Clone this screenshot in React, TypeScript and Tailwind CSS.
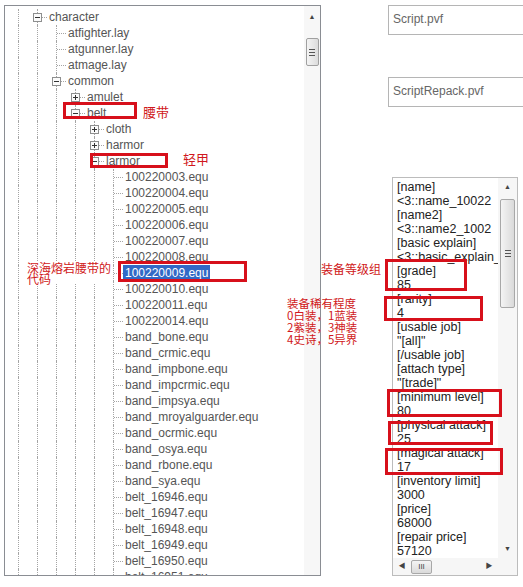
import React from "react";

type Node = { level: number; text: string; toggle?: "+" | "-"; selected?: boolean };

const files = [
  "100220003.equ", "100220004.equ", "100220005.equ", "100220006.equ", "100220007.equ",
  "100220008.equ", "100220009.equ", "100220010.equ", "100220011.equ", "100220014.equ",
  "band_bone.equ", "band_crmic.equ", "band_impbone.equ", "band_impcrmic.equ", "band_impsya.equ",
  "band_mroyalguarder.equ", "band_ocrmic.equ", "band_osya.equ", "band_rbone.equ", "band_sya.equ",
  "belt_16946.equ", "belt_16947.equ", "belt_16948.equ", "belt_16949.equ", "belt_16950.equ",
  "belt_16951.equ",
];

const nodes: Node[] = [
  { level: 1, text: "character", toggle: "-" },
  { level: 2, text: "atfighter.lay" },
  { level: 2, text: "atgunner.lay" },
  { level: 2, text: "atmage.lay" },
  { level: 2, text: "common", toggle: "-" },
  { level: 3, text: "amulet", toggle: "+" },
  { level: 3, text: "belt", toggle: "-" },
  { level: 4, text: "cloth", toggle: "+" },
  { level: 4, text: "harmor", toggle: "+" },
  { level: 4, text: "larmor", toggle: "-" },
  ...files.map((f) => ({ level: 5, text: f, selected: f === "100220009.equ" })),
];

const scriptLines = [
  "[name]", "<3::name_10022", "[name2]", "<3::name2_1002", "[basic explain]", "<3::basic_explain_",
  "[grade]", "85", "[rarity]", "4", "[usable job]", "\"[all]\"", "[/usable job]", "[attach type]",
  "\"[trade]\"", "[minimum level]", "80", "[physical attack]", "25", "[magical attack]", "17",
  "[inventory limit]", "3000", "[price]", "68000", "[repair price]", "57120",
];

function Guide() {
  return (
    <div className="flex w-[19px] shrink-0 justify-center">
      <div className="h-full border-l border-dotted border-[#a5a5a5]" />
    </div>
  );
}

function Expander({ sign }: { sign: "+" | "-" }) {
  return (
    <div className="relative w-[19px] shrink-0">
      <div className="absolute left-[9px] top-0 h-full border-l border-dotted border-[#a5a5a5]" />
      <div className="absolute left-[14px] top-[8px] w-[5px] border-t border-dotted border-[#a5a5a5]" />
      <svg className="absolute left-[5px] top-[4px]" width="9" height="9" viewBox="0 0 9 9">
        <rect x="0.5" y="0.5" width="8" height="8" fill="#fbfbfb" stroke="#8e8f8f" />
        <line x1="2" y1="4.5" x2="7" y2="4.5" stroke="#333" />
        {sign === "+" && <line x1="4.5" y1="2" x2="4.5" y2="7" stroke="#333" />}
      </svg>
    </div>
  );
}

function Leaf() {
  return (
    <div className="relative w-[19px] shrink-0">
      <div className="absolute left-[9px] top-0 h-full border-l border-dotted border-[#a5a5a5]" />
      <div className="absolute left-[10px] top-[8px] w-[9px] border-t border-dotted border-[#a5a5a5]" />
    </div>
  );
}

function TreeRow({ node }: { node: Node }) {
  const guides = Array.from({ length: node.level }, (_, i) => <Guide key={i} />);
  return (
    <div className="flex h-4 shrink-0">
      {guides}
      {node.toggle ? <Expander sign={node.toggle} /> : <Leaf />}
      <span
        className={
          node.selected
            ? "bg-[#3169c6] px-[2px] leading-4 text-white"
            : "px-[2px] leading-4 text-[#555]"
        }
      >
        {node.text}
      </span>
    </div>
  );
}

function Grip() {
  return (
    <div className="flex flex-col gap-[2px]">
      <div className="h-px w-[6px] bg-[#555]" />
      <div className="h-px w-[6px] bg-[#555]" />
      <div className="h-px w-[6px] bg-[#555]" />
    </div>
  );
}

function TreePanel() {
  return (
    <div className="flex h-[571px] w-[317px] shrink-0 border border-[#8a8d93] bg-white">
      <div className="flex flex-1 flex-col overflow-hidden pl-[4px] pt-[3px] text-[12px] whitespace-nowrap">
        {nodes.map((n, i) => (
          <TreeRow key={i} node={n} />
        ))}
      </div>
      <div className="flex w-[16px] shrink-0 flex-col items-center bg-[#f7f7f7]">
        <div className="flex h-[22px] items-center justify-center text-[7px] text-[#444]">▲</div>
        <div className="mt-[10px] flex h-[28px] w-[13px] items-center justify-center rounded-[2px] border border-[#a0a0a0] bg-gradient-to-r from-[#f4f4f4] to-[#dcdcdc]">
          <Grip />
        </div>
      </div>
    </div>
  );
}

function FileBox({ name }: { name: string }) {
  return (
    <div className="h-[30px] w-[200px] border border-[#b5b5b5] bg-white px-[4px] pt-[4px] text-[12px] text-[#666]">
      {name}
    </div>
  );
}

function ScriptView() {
  return (
    <div className="ml-[4px] flex h-[399px] w-[126px] flex-col border border-[#bcbcbc] bg-white">
      <div className="flex h-[381px]">
        <div className="flex-1 overflow-hidden whitespace-nowrap pl-[4px] pt-[2px] text-[12.5px] leading-[14px] text-[#222]">
          {scriptLines.map((l, i) => (
            <div key={i}>{l}</div>
          ))}
        </div>
        <div className="flex w-[19px] shrink-0 flex-col items-center bg-[#f6f6f6]">
          <div className="flex h-[18px] items-center justify-center text-[7px] text-[#444]">▲</div>
          <div className="mt-[3px] flex h-[109px] w-[15px] items-center justify-center rounded-[2px] border border-[#a8a8a8] bg-gradient-to-r from-[#f4f4f4] to-[#dadada]">
            <Grip />
          </div>
          <div className="flex-1" />
          <div className="flex h-[18px] items-center justify-center text-[7px] text-[#444]">▼</div>
        </div>
      </div>
      <div className="flex h-[17px] items-center bg-[#f6f6f6] text-[7px] text-[#444]">
        <span className="w-[18px] text-center">◀</span>
        <div className="flex h-[14px] w-[21px] items-center justify-center rounded-[2px] border border-[#a8a8a8] bg-gradient-to-b from-[#f4f4f4] to-[#dadada] text-[8px] leading-none">
          III
        </div>
        <div className="flex-1" />
        <span className="w-[18px] text-center">▶</span>
        <div className="w-[19px]" />
      </div>
    </div>
  );
}

const red = "border-[3px] border-[#d7101b]";
const cjk = { fontFamily: '"Noto Sans CJK SC", sans-serif' };

export default function App() {
  return (
    <div
      className="relative h-[587px] w-[523px] overflow-hidden bg-white"
      style={{ fontFamily: '"Liberation Sans", "Noto Sans CJK SC", sans-serif' }}
    >
      <div className="flex pl-[4px] pt-[5px]">
        <TreePanel />
        <div className="ml-[67px] flex shrink-0 flex-col">
          <FileBox name="Script.pvf" />
          <div className="mt-[42px]">
            <FileBox name="ScriptRepack.pvf" />
          </div>
          <div className="mt-[70px]">
            <ScriptView />
          </div>
        </div>
      </div>

      {/* annotations */}
      <div className={`absolute left-[63px] top-[102px] h-[17px] w-[74px] ${red}`} />
      <div className="absolute left-[143px] top-[105px] text-[13px] leading-[13px] text-[#d01820]" style={cjk}>腰带</div>
      <div className={`absolute left-[90px] top-[153px] h-[15px] w-[78px] ${red}`} />
      <div className="absolute left-[183px] top-[152px] text-[13px] leading-[13px] text-[#d01820]" style={cjk}>轻甲</div>
      <div className={`absolute left-[118px] top-[261px] h-[21px] w-[129px] ${red}`} />
      <div className="absolute left-[27px] top-[262px] bg-white text-[12px] leading-[11px] text-[#d01820]" style={cjk}>
        深海熔岩腰带的
        <br />
        代码
      </div>
      <div className="absolute left-[321px] top-[262px] text-[12px] leading-[13px] text-[#d01820]" style={cjk}>装备等级组</div>
      <div className="absolute left-[287px] top-[297px] text-[11.5px] leading-[12px] text-[#d01820]" style={cjk}>
        装备稀有程度
        <br />
        0白装，1蓝装
        <br />
        2紫装，3神装
        <br />
        4史诗，5异界
      </div>
      <div className={`absolute left-[385px] top-[259px] h-[32px] w-[82px] ${red}`} />
      <div className={`absolute left-[384px] top-[296px] h-[25px] w-[99px] ${red}`} />
      <div className={`absolute left-[387px] top-[389px] h-[28px] w-[115px] ${red}`} />
      <div className={`absolute left-[388px] top-[421px] h-[24px] w-[105px] ${red}`} />
      <div className={`absolute left-[385px] top-[448px] h-[27px] w-[118px] ${red}`} />
    </div>
  );
}
